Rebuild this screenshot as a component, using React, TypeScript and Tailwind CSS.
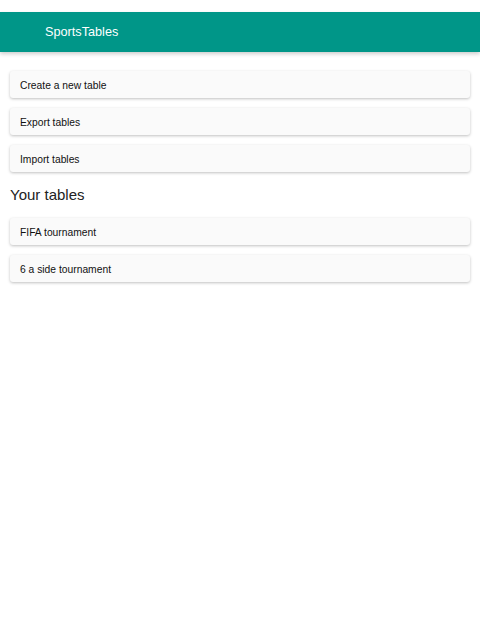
const actions = ['Create a new table', 'Export tables', 'Import tables'];
const tables = ['FIFA tournament', '6 a side tournament'];

function Card({ label }: { label: string }) {
  return (
    <button className="w-full h-[27px] flex items-center px-[10px] pt-[2px] bg-[#fafafa] rounded-[3px] shadow-[0_1px_3px_rgba(0,0,0,0.25)] text-[10.3px] text-[#111] text-left">
      {label}
    </button>
  );
}

export default function App() {
  return (
    <div className="min-h-[640px] bg-white pt-[12px] font-['Liberation_Sans',Arial,sans-serif]">
      {/* Toolbar */}
      <header className="h-[40px] bg-[#009688] flex items-center pl-[45px] pt-[2px] shadow-[0_2px_4px_rgba(0,0,0,0.2)]">
        <span className="text-white text-[12.7px]">SportsTables</span>
      </header>

      <main className="px-[10px] pt-[19px]">
        <div className="flex flex-col gap-[10px]">
          {actions.map((a) => (
            <Card key={a} label={a} />
          ))}
        </div>

        <h2 className="text-[15px] text-[#222] leading-[24px] mt-[11px] mb-[11px]">Your tables</h2>

        <div className="flex flex-col gap-[10px]">
          {tables.map((t) => (
            <Card key={t} label={t} />
          ))}
        </div>
      </main>
    </div>
  );
}
